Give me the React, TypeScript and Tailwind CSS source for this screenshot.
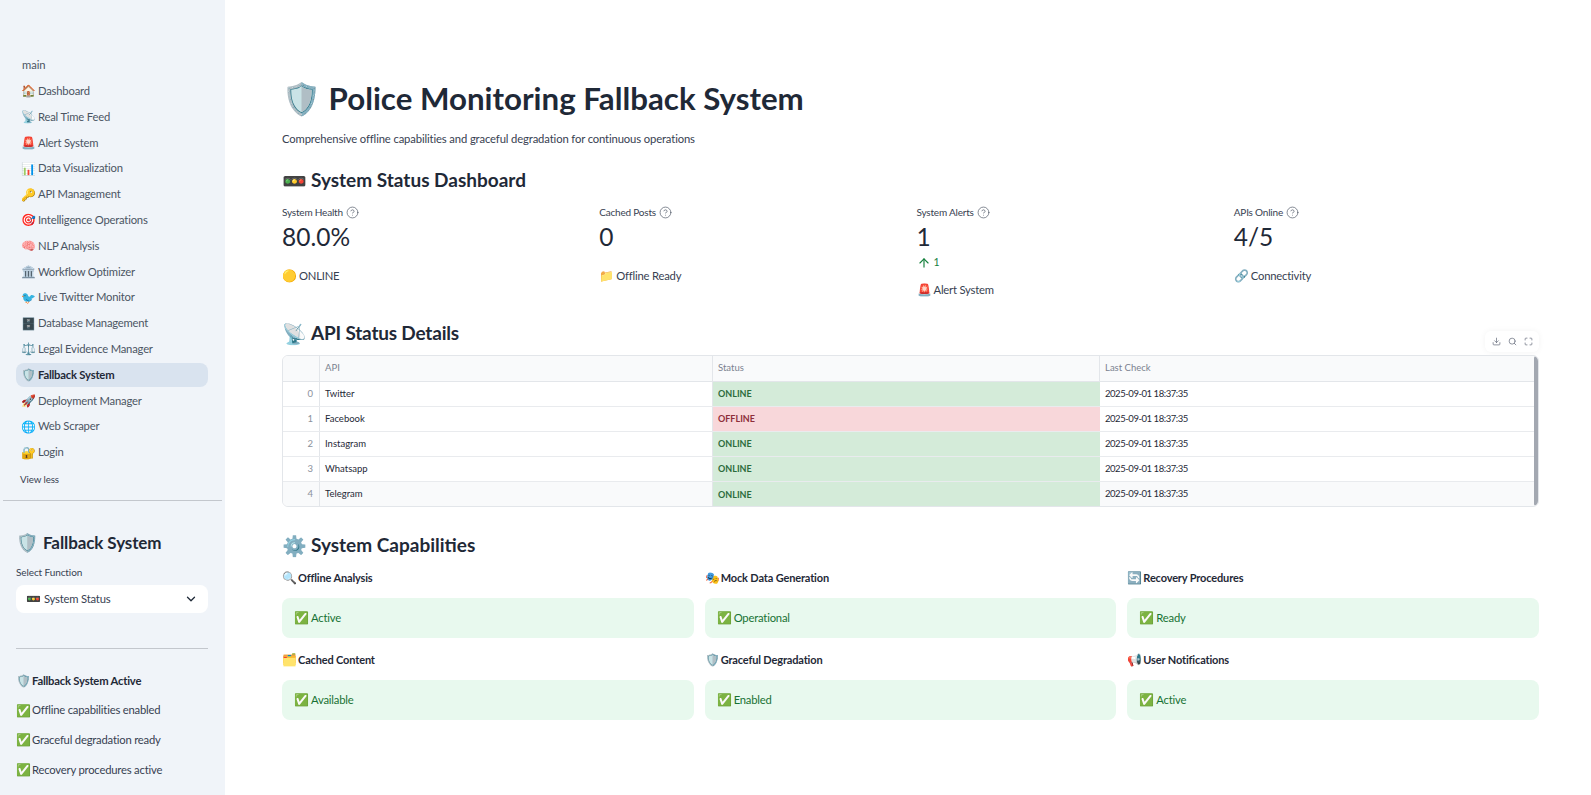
import React from "react";
import { ArrowUp, ChevronDown, CircleHelp, Download, Maximize, Search } from "lucide-react";

const nav = [
  ["🏠", "Dashboard"],
  ["📡", "Real Time Feed"],
  ["🚨", "Alert System"],
  ["📊", "Data Visualization"],
  ["🔑", "API Management"],
  ["🎯", "Intelligence Operations"],
  ["🧠", "NLP Analysis"],
  ["🏛️", "Workflow Optimizer"],
  ["🐦", "Live Twitter Monitor"],
  ["🗄️", "Database Management"],
  ["⚖️", "Legal Evidence Manager"],
  ["🛡️", "Fallback System"],
  ["🚀", "Deployment Manager"],
  ["🌐", "Web Scraper"],
  ["🔐", "Login"],
];

const metrics = [
  { label: "System Health", value: "80.0%", icon: "🟡", note: "ONLINE" },
  { label: "Cached Posts", value: "0", icon: "📁", note: "Offline Ready" },
  { label: "System Alerts", value: "1", delta: "1", icon: "🚨", note: "Alert System" },
  { label: "APIs Online", value: "4/5", icon: "🔗", note: "Connectivity" },
];

const rows = [
  ["0", "Twitter", "ONLINE"],
  ["1", "Facebook", "OFFLINE"],
  ["2", "Instagram", "ONLINE"],
  ["3", "Whatsapp", "ONLINE"],
  ["4", "Telegram", "ONLINE"],
];

const caps = [
  ["🔍", "Offline Analysis", "Active"],
  ["🎭", "Mock Data Generation", "Operational"],
  ["🔄", "Recovery Procedures", "Ready"],
  ["🗂️", "Cached Content", "Available"],
  ["🛡️", "Graceful Degradation", "Enabled"],
  ["📢", "User Notifications", "Active"],
];

function Em({ c }: { c: string }) {
  return <span className="w-[13px] shrink-0 text-center text-[12px] tracking-normal">{c}</span>;
}

function Sidebar() {
  return (
    <aside className="w-[225px] h-[795px] shrink-0 overflow-hidden bg-[#f0f4f9] text-[#4b5563]">
      <div className="pl-4 pr-[17px] pt-[57px]">
        <div className="pl-[6px] h-[16px] leading-[16px] text-[11.25px] tracking-[-0.1px]">main</div>
        <nav className="mt-[4.5px] flex flex-col">
          {nav.map(([icon, name]) => {
            const active = name === "Fallback System";
            return (
              <div
                key={name}
                className={
                  active
                    ? "mt-[2px] h-[23.8px] flex items-center gap-[4px] pl-[5px] rounded-lg bg-[#d9e3ef] text-[11.25px] tracking-[-0.2px] font-bold text-[#1f2937]"
                    : "mt-[2px] h-[23.8px] flex items-center gap-[4px] pl-[5px] rounded-lg text-[11.25px] tracking-[-0.2px]"
                }
              >
                <Em c={icon} />
                <span>{name}</span>
              </div>
            );
          })}
        </nav>
        <div className="mt-[6.5px] pl-[4px] h-[16px] leading-[16px] text-[9.75px] tracking-[-0.1px] text-[#374151]">View less</div>
      </div>
      <div className="mx-[3px] mt-[13px] h-px bg-[#c3c7cd]" />
      <div className="pl-4 pr-[17px]">
        <h2 className="mt-[30px] h-[24px] flex items-center gap-[5px] text-[17px] tracking-[-0.1px] font-bold text-[#1f2937] whitespace-nowrap">
          <span className="text-[18px] tracking-normal">🛡️</span>
          <span>Fallback System</span>
        </h2>
        <div className="mt-[10px] h-[14px] leading-[14px] text-[10px] tracking-[-0.1px] text-[#374151]">Select Function</div>
        <div className="mt-[6px] h-[28px] px-[10px] flex items-center justify-between rounded-lg bg-white text-[11.25px] tracking-[-0.2px] text-[#374151]">
          <span className="flex items-center gap-[3px]">
            <span className="text-[12px] tracking-normal">🚥</span>
            <span>System Status</span>
          </span>
          <ChevronDown size={14} strokeWidth={2.25} className="text-[#1f2937]" />
        </div>
        <div className="mt-[35px] h-px bg-[#c3c7cd]" />
        <div className="mt-[24px] flex flex-col gap-[13.7px] text-[11.25px] tracking-[-0.2px] text-[#374151]">
          <div className="h-[16px] flex items-center gap-[3px] font-bold text-[#1f2937]"><Em c="🛡️" />Fallback System Active</div>
          <div className="h-[16px] flex items-center gap-[3px]"><Em c="✅" />Offline capabilities enabled</div>
          <div className="h-[16px] flex items-center gap-[3px]"><Em c="✅" />Graceful degradation ready</div>
          <div className="h-[16px] flex items-center gap-[3px]"><Em c="✅" />Recovery procedures active</div>
        </div>
      </div>
    </aside>
  );
}

function Metric({ label, value, delta, icon, note }: { label: string; value: string; delta?: string; icon: string; note: string }) {
  return (
    <div>
      <div className="h-[16px] flex items-center gap-[3px] text-[10px] tracking-[-0.2px] text-[#374151]">
        <span>{label}</span>
        <CircleHelp size={13} strokeWidth={1.25} className="text-[#4b5563]" />
      </div>
      <div className="mt-[1px] h-[32px] leading-[32px] text-[24.5px] text-[#1f2937]">{value}</div>
      {delta ? (
        <div className="mt-[2px] h-[16px] flex items-center gap-[3px] text-[10.5px] text-[#15803d]">
          <ArrowUp size={14} strokeWidth={2} />
          <span>{delta}</span>
        </div>
      ) : null}
      <div
        className={
          delta
            ? "mt-[11px] h-[16px] flex items-center gap-[4px] text-[11.25px] tracking-[-0.2px] text-[#374151]"
            : "mt-[15px] h-[16px] flex items-center gap-[4px] text-[11.25px] tracking-[-0.2px] text-[#374151]"
        }
      >
        <Em c={icon} />
        <span>{note}</span>
      </div>
    </div>
  );
}

function ApiTable() {
  return (
    <div className="relative">
      <div className="absolute right-0 top-[-24px] h-[21px] w-[54px] flex items-center justify-center gap-[7px] rounded-md bg-white shadow-[0_0_6px_rgba(0,0,0,0.05)] text-[#6b7280]">
        <Download size={9} />
        <Search size={9} />
        <Maximize size={9} />
      </div>
      <div className="relative h-[152px] overflow-hidden rounded-md border border-[#e3e6ea] text-[9.5px] text-[#1f2937]">
        <div className="grid grid-cols-[37px_393px_387px_1fr] h-[26px] bg-[#f9fafb] border-b border-[#e3e6ea] text-[#7b8290]">
          <div className="border-r border-[#e3e6ea]" />
          <div className="border-r border-[#e3e6ea] pl-[5px] flex items-center">API</div>
          <div className="border-r border-[#e3e6ea] pl-[5px] flex items-center">Status</div>
          <div className="pl-[5px] flex items-center">Last Check</div>
        </div>
        {rows.map(([i, api, status], idx) => (
          <div
            key={i}
            className={
              idx === 4
                ? "grid grid-cols-[37px_393px_387px_1fr] h-[25px] bg-[#f9fafb]"
                : "grid grid-cols-[37px_393px_387px_1fr] h-[25px] border-b border-[#e9ebee]"
            }
          >
            <div className="border-r border-[#e3e6ea] pr-[6px] flex items-center justify-end text-[#8b919c]">{i}</div>
            <div className="border-r border-[#e3e6ea] pl-[5px] flex items-center">{api}</div>
            <div
              className={
                status === "ONLINE"
                  ? "pl-[5px] flex items-center bg-[#d4ebd9] text-[#2c6b3c] text-[9px] font-bold"
                  : "pl-[5px] flex items-center bg-[#f8d7da] text-[#8f2f3a] text-[9px] font-bold"
              }
            >
              {status}
            </div>
            <div className="pl-[5px] flex items-center tracking-[-0.45px]">2025-09-01 18:37:35</div>
          </div>
        ))}
        <div className="absolute right-0 top-0 h-full w-[4px] rounded-full bg-[#a3a8b1]" />
      </div>
    </div>
  );
}

function Heading({ icon, children, className }: { icon: string; children: React.ReactNode; className: string }) {
  return (
    <h2 className={className}>
      <span className="text-[20px] tracking-normal">{icon}</span>
      <span>{children}</span>
    </h2>
  );
}

export default function App() {
  return (
    <div className="flex h-[795px] overflow-hidden bg-white font-['Lato',sans-serif]">
      <Sidebar />
      <main className="flex-1 min-w-0 pl-[57px] pr-[52px] pt-[76px]">
        <h1 className="h-[44px] leading-[44px] text-[31.25px] font-bold text-[#1f2937] whitespace-nowrap">🛡️ Police Monitoring Fallback System</h1>
        <p className="mt-[11px] h-[16px] leading-[16px] text-[11.25px] tracking-[-0.13px] text-[#374151]">Comprehensive offline capabilities and graceful degradation for continuous operations</p>
        <Heading icon="🚥" className="mt-[19px] h-[28px] flex items-center gap-[4px] text-[19px] font-bold text-[#1f2937]">System Status Dashboard</Heading>
        <div className="mt-[10px] grid grid-cols-4 gap-x-[12px]">
          {metrics.map((m) => (
            <Metric key={m.label} {...m} />
          ))}
        </div>
        <Heading icon="📡" className="mt-[21px] h-[28px] flex items-center gap-[4px] text-[19px] tracking-[-0.2px] font-bold text-[#1f2937]">API Status Details</Heading>
        <div className="mt-[8px]">
          <ApiTable />
        </div>
        <Heading icon="⚙️" className="mt-[24px] h-[28px] flex items-center gap-[4px] text-[19px] font-bold text-[#1f2937]">System Capabilities</Heading>
        <div className="mt-[11px] grid grid-cols-3 gap-x-[11px]">
          {caps.map(([icon, title, state], i) => (
            <div key={title} className={i > 2 ? "mt-[14px]" : ""}>
              <div className="h-[16px] flex items-center gap-[3px] text-[11px] tracking-[-0.15px] font-bold text-[#1f2937]">
                <Em c={icon} />
                <span>{title}</span>
              </div>
              <div className="mt-[12px] h-[40px] pl-[12px] flex items-center gap-[4px] rounded-lg bg-[#e8f9ee] text-[11.25px] tracking-[-0.2px] text-[#177233]">
                <Em c="✅" />
                <span>{state}</span>
              </div>
            </div>
          ))}
        </div>
      </main>
    </div>
  );
}
